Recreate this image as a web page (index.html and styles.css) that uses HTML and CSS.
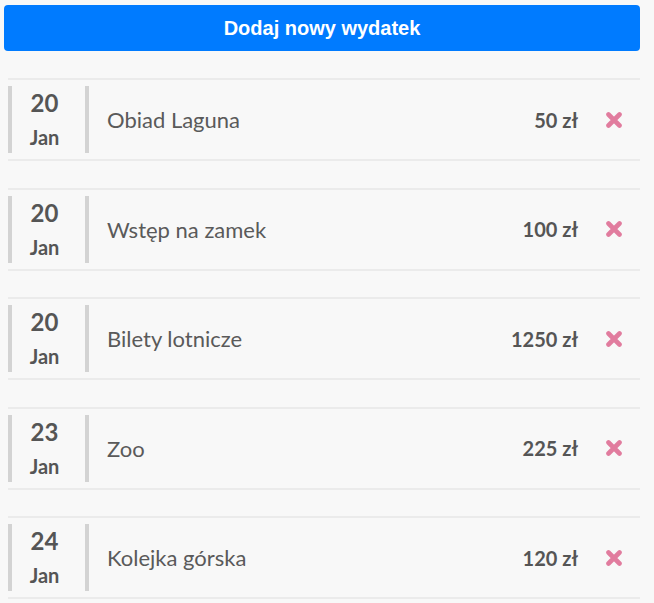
FILE: index.html
```html
<!DOCTYPE html>
<html lang="pl">
<head>
<meta charset="utf-8">
<title>Wydatki</title>
<link rel="stylesheet" href="styles.css">
</head>
<body>
<div class="app">
  <button class="add-btn">Dodaj nowy wydatek</button>
  <ul class="list">
    <li class="item">
      <div class="date"><span class="day">20</span><span class="month">Jan</span></div>
      <div class="title">Obiad Laguna</div>
      <div class="amount">50 zł</div>
      <span class="del"><svg width="16" height="16" viewBox="0 0 16 16"><path d="M2.5 2.5L13.5 13.5M13.5 2.5L2.5 13.5" stroke="#e17c9e" stroke-width="4.6" stroke-linecap="round"/></svg></span>
    </li>
    <li class="item">
      <div class="date"><span class="day">20</span><span class="month">Jan</span></div>
      <div class="title">Wstęp na zamek</div>
      <div class="amount">100 zł</div>
      <span class="del"><svg width="16" height="16" viewBox="0 0 16 16"><path d="M2.5 2.5L13.5 13.5M13.5 2.5L2.5 13.5" stroke="#e17c9e" stroke-width="4.6" stroke-linecap="round"/></svg></span>
    </li>
    <li class="item">
      <div class="date"><span class="day">20</span><span class="month">Jan</span></div>
      <div class="title">Bilety lotnicze</div>
      <div class="amount">1250 zł</div>
      <span class="del"><svg width="16" height="16" viewBox="0 0 16 16"><path d="M2.5 2.5L13.5 13.5M13.5 2.5L2.5 13.5" stroke="#e17c9e" stroke-width="4.6" stroke-linecap="round"/></svg></span>
    </li>
    <li class="item">
      <div class="date"><span class="day">23</span><span class="month">Jan</span></div>
      <div class="title">Zoo</div>
      <div class="amount">225 zł</div>
      <span class="del"><svg width="16" height="16" viewBox="0 0 16 16"><path d="M2.5 2.5L13.5 13.5M13.5 2.5L2.5 13.5" stroke="#e17c9e" stroke-width="4.6" stroke-linecap="round"/></svg></span>
    </li>
    <li class="item">
      <div class="date"><span class="day">24</span><span class="month">Jan</span></div>
      <div class="title">Kolejka górska</div>
      <div class="amount">120 zł</div>
      <span class="del"><svg width="16" height="16" viewBox="0 0 16 16"><path d="M2.5 2.5L13.5 13.5M13.5 2.5L2.5 13.5" stroke="#e17c9e" stroke-width="4.6" stroke-linecap="round"/></svg></span>
    </li>
  </ul>
</div>
</body>
</html>
```

FILE: styles.css
```css
html, body {
  margin: 0;
  padding: 0;
  background: #f8f8f8;
}
body {
  font-family: Lato, "Open Sans", sans-serif;
  color: #555;
  overflow: hidden;
}
.app {
  padding: 5px 14px 0 4px;
}
.add-btn {
  display: block;
  width: 100%;
  height: 46px;
  border: none;
  border-radius: 4px;
  background: #007bff;
  color: #fff;
  font-family: "Liberation Sans", Arial, sans-serif;
  font-weight: bold;
  font-size: 20px;
  padding: 0;
  margin: 0;
}
.list {
  list-style: none;
  margin: 27px 0 0 4px;
  padding: 0;
}
.item {
  display: flex;
  align-items: center;
  border-top: 2px solid #ebebeb;
  border-bottom: 2px solid #ebebeb;
  padding: 6px 0;
  margin-bottom: 26.5px;
}
.date {
  box-sizing: border-box;
  width: 81px;
  height: 67px;
  border-left: 4px solid #d3d3d3;
  border-right: 4px solid #d3d3d3;
  display: flex;
  flex-direction: column;
  align-items: center;
  padding-right: 8px;
  font-weight: bold;
}
.day {
  font-size: 24px;
  line-height: 34px;
}
.month {
  font-size: 20px;
  line-height: 31px;
  padding-top: 2px;
}
.title {
  flex: 1;
  padding-left: 18px;
  font-size: 22px;
  color: #5a5a5a;
}
.amount {
  font-size: 20px;
  font-weight: bold;
}
.del {
  display: flex;
  margin-left: 28px;
  margin-right: 18px;
}
```
